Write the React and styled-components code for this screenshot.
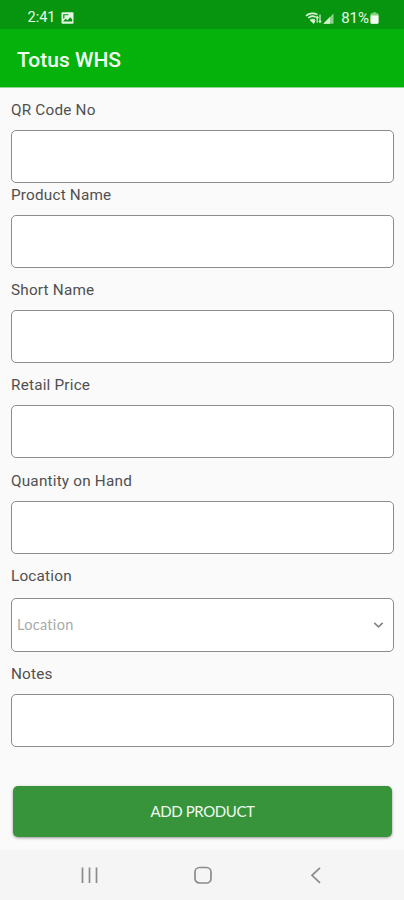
import React from 'react';
import styled, { createGlobalStyle } from 'styled-components';

const fields = [
  { label: 'QR Code No', top: 12 },
  { label: 'Product Name', top: 2 },
  { label: 'Short Name', top: 12 },
  { label: 'Retail Price', top: 12 },
  { label: 'Quantity on Hand', top: 12.5 },
  { label: 'Location', top: 12.5, gap: 12, height: 53.5, select: true },
  { label: 'Notes', top: 12 },
];

const PictureIcon = () => (
  <svg width='13' height='12' viewBox='0 0 13 12'>
    <rect x='0.5' y='0.3' width='12' height='11.4' rx='1' fill='#e2f5e0' />
    <path d='M2.2 2.2h5.2v1H3.4v3.2H2.2z' fill='#079510' />
    <path d='M2 9.6l2.7-2.8 1.8 1.5 2.7-3 2 2.3v2z' fill='#079510' />
  </svg>
);

const WifiIcon = () => (
  <svg width='17' height='13' viewBox='0 0 17 13' fill='none' stroke='#d7f0d5'>
    <path d='M1 3.8C4 .9 9.3 .6 12.4 2.6' strokeWidth='1.7' />
    <path d='M3.2 6C5.3 4.1 8.5 3.8 10.7 5.2' strokeWidth='1.6' />
    <path d='M5.2 8.1C6.7 6.9 8.5 6.9 10 8L8.8 11.4z' fill='#d7f0d5' strokeWidth='1' />
    <path d='M12.2 4.5v6.3M10.9 6.1l1.3-1.6 1.3 1.6M15 2.5v7.8M13.8 8.8l1.2 1.5 1.2-1.5' strokeWidth='1.2' />
  </svg>
);

const SignalIcon = () => (
  <svg width='11' height='11' viewBox='0 0 11 11'>
    <path d='M0.3 10.8L10.5 0.5v10.3z' fill='#8bd187' />
    <path d='M0.3 10.8L7 4v6.8z' fill='#d7f0d5' />
  </svg>
);

const BatteryIcon = () => (
  <svg width='9' height='12' viewBox='0 0 9 12'>
    <path d='M2.8 0.3h3.4v1.3H2.8z' fill='#8bd187' />
    <rect x='0.5' y='1.3' width='8' height='10.4' rx='1.3' fill='#8bd187' />
    <path d='M0.5 3.4h8v7a1.3 1.3 0 0 1-1.3 1.3H1.8a1.3 1.3 0 0 1-1.3-1.3z' fill='#f0faef' />
  </svg>
);

export default function App() {
  return (
    <>
      <GlobalStyle />
      <Screen>
        <StatusBar>
          <div className='group'>
            <span className='time'>2:41</span>
            <PictureIcon />
          </div>
          <div className='group right'>
            <WifiIcon />
            <SignalIcon />
            <span className='percent'>81%</span>
            <BatteryIcon />
          </div>
        </StatusBar>
        <Header>Totus WHS</Header>
        <Form>
          {fields.map((item) => (
            <Field key={item.label} $top={item.top}>
              <Label $gap={item.gap}>{item.label}</Label>
              <Box $height={item.height}>
                {item.select && (
                  <>
                    <span>Location</span>
                    <svg width='11' height='8' viewBox='0 0 11 8' fill='none' stroke='#858585' strokeWidth='1.7'>
                      <path d='M1.3 1.8L5.5 5.8L9.7 1.8' />
                    </svg>
                  </>
                )}
              </Box>
            </Field>
          ))}
          <AddButton>ADD PRODUCT</AddButton>
        </Form>
        <NavBar>
          <svg width='18' height='18' viewBox='0 0 18 18' stroke='#8b8b8b' strokeWidth='1.7'>
            <path d='M2.5 1.5v15.5M9.5 1.5v15.5M16.5 1.5v15.5' />
          </svg>
          <svg width='18' height='18' viewBox='0 0 18 18' fill='none' stroke='#8b8b8b' strokeWidth='1.7'>
            <rect x='1' y='1.5' width='16' height='15.5' rx='4.5' />
          </svg>
          <svg width='18' height='18' viewBox='0 0 18 18' fill='none' stroke='#8b8b8b' strokeWidth='1.7'>
            <path d='M13 1.8L5 9.3l8 7.5' />
          </svg>
        </NavBar>
      </Screen>
    </>
  );
}

const GlobalStyle = createGlobalStyle`
  * {
    box-sizing: border-box;
  }

  body {
    margin: 0;
    background: #fafafa;
    font-family: Roboto, sans-serif;
  }
`;

const Screen = styled.div`
  display: flex;
  flex-direction: column;
  width: 404px;
  height: 900px;
  overflow: hidden;
  background: #fafafa;
`;

const StatusBar = styled.div`
  display: flex;
  justify-content: space-between;
  height: 29px;
  padding: 7px 25px 0 27.5px;
  background: #079510;
  color: #e8f8e6;
  font-size: 14.5px;
  line-height: 22px;

  .group {
    display: flex;
    align-items: center;
    height: 22px;
    gap: 6px;
  }

  .right {
    gap: 1px;
  }

  .percent {
    margin: 0 0 0 6px;
    font-size: 15px;
  }
`;

const Header = styled.div`
  height: 59px;
  padding-left: 17px;
  background: #05b10b;
  border-bottom: 1px solid #8fd48f;
  color: #f3fff2;
  font-size: 21px;
  font-weight: 500;
  line-height: 62px;
`;

const Form = styled.div`
  flex: 1;
  padding: 0 10px 0 11px;
`;

const Field = styled.div`
  padding-top: ${(props) => props.$top}px;
`;

const Label = styled.div`
  height: 20px;
  margin-bottom: ${(props) => props.$gap || 10}px;
  color: #505050;
  font-size: 15.3px;
  line-height: 20px;
  letter-spacing: 0.2px;
`;

const Box = styled.div`
  display: flex;
  align-items: center;
  justify-content: space-between;
  height: ${(props) => props.$height || 53}px;
  padding: 0 9px 0 5px;
  background: #ffffff;
  border: 1px solid #8c8c8c;
  border-radius: 5px;
  color: #aaaaaa;
  font-family: Lato, sans-serif;
  font-size: 14.5px;
  font-variant-ligatures: none;
  letter-spacing: 0.3px;
`;

const AddButton = styled.button`
  display: block;
  width: 379px;
  height: 51px;
  margin: 39.5px 0 0 2px;
  padding: 0 0 2px;
  background: #37943b;
  border: 0;
  border-radius: 5px;
  box-shadow: 0 1px 3px rgba(0, 0, 0, 0.4);
  color: #f0faf0;
  font-family: Lato, sans-serif;
  font-size: 15px;
  letter-spacing: -0.4px;
`;

const NavBar = styled.div`
  display: flex;
  align-items: center;
  justify-content: space-between;
  height: 50px;
  padding: 0 79px 0 80px;
  background: #f5f5f5;
`;
